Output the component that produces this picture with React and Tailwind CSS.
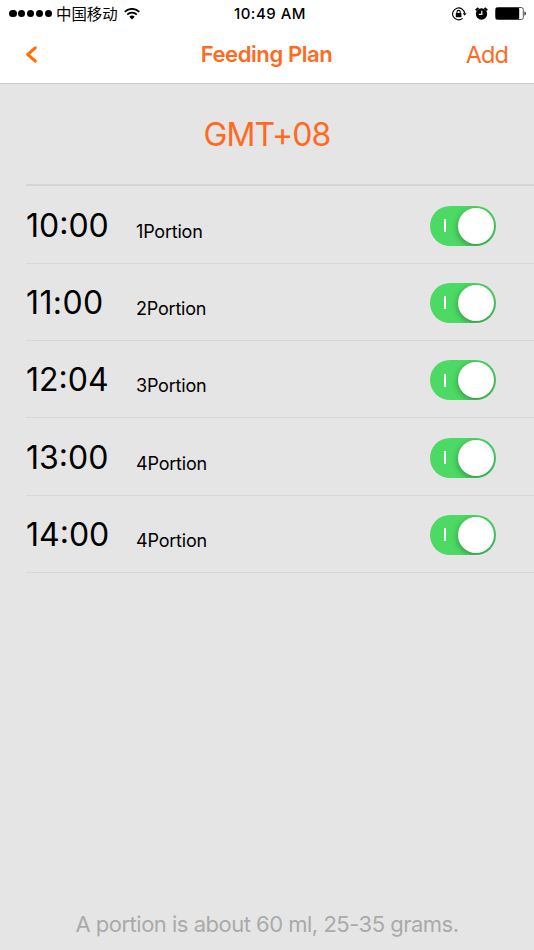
import { useState } from "react";

const PLANS = [
	{ time: "10:00", portion: 1 },
	{ time: "11:00", portion: 2 },
	{ time: "12:04", portion: 3 },
	{ time: "13:00", portion: 4 },
	{ time: "14:00", portion: 4 },
];

const StatusBar = () => (
	<div className="grid h-[27px] grid-cols-3 items-center pl-[9px] pr-[7px] text-black">
		<div className="flex items-center">
			<div className="flex gap-[1.4px]">
				{[0, 1, 2, 3, 4].map((dot) => (
					<span key={dot} className="h-[7.5px] w-[7.5px] rounded-full bg-black" />
				))}
			</div>
			<span className="ml-1 font-['Noto_Sans_CJK_SC',sans-serif] text-[15.4px] leading-none">
				中国移动
			</span>
			<svg className="ml-[6px] h-3 w-4" viewBox="0 0 16 12" fill="none" stroke="#000">
				<path d="M.7 3.8a10.5 10.5 0 0 1 14.6 0" strokeWidth="1.8" />
				<path d="M3.2 6.7a6.7 6.7 0 0 1 9.6 0" strokeWidth="1.7" />
				<path d="M8 11.4 5.3 8.8a3.9 3.9 0 0 1 5.4 0Z" fill="#000" stroke="none" />
			</svg>
		</div>
		<span className="whitespace-nowrap pl-1 text-center text-[15px] font-medium leading-none tracking-[0.5px]">
			10:49 AM
		</span>
		<div className="flex items-center justify-end">
			<svg className="h-[14px] w-[15px]" viewBox="0 0 15 14" fill="none" stroke="#000">
				<path d="M12.6 6.4A6 6 0 1 0 10.6 11.4" strokeWidth="1.1" />
				<path d="M10.7 6.2h3.9l-1.9 2.6Z" fill="#000" stroke="none" />
				<rect x="3.8" y="6" width="5.6" height="4.2" fill="#000" stroke="none" />
				<path d="M5 6.4V5a1.6 1.6 0 0 1 3.2 0v1.4" strokeWidth="1.1" />
			</svg>
			<svg className="ml-2 h-[13px] w-[13px]" viewBox="0 0 13 13" fill="none">
				<circle cx="6.5" cy="7" r="5.7" fill="#000" />
				<path d="M.7 3.2 3.5.9M9.5.9l2.8 2.3" stroke="#000" strokeWidth="1.9" />
				<path d="M6.8 3.8v3.6H3.9" stroke="#fff" strokeWidth="1.2" />
			</svg>
			<svg className="ml-[7px] h-[13px] w-8" viewBox="0 0 32 13" fill="none">
				<rect x=".5" y=".5" width="27.8" height="12" rx="2" stroke="#555" />
				<rect x=".8" y=".8" width="23.4" height="11.4" rx="1.2" fill="#000" />
				<path d="M29.5 4.5c1.7.5 1.7 3.5 0 4Z" fill="#000" />
			</svg>
		</div>
	</div>
);

const Switch = ({ on, onClick }) => (
	<button
		type="button"
		role="switch"
		aria-checked={on}
		onClick={onClick}
		className={`flex h-[40px] w-[66px] items-center overflow-hidden rounded-full p-[2px] ${
			on ? "justify-between bg-[#4cd964]" : "bg-gray-300"
		}`}
	>
		{on && <span className="ml-3 h-[13px] w-[1.5px] bg-white" />}
		<span className="h-9 w-9 rounded-full bg-white shadow-[0_2px_6px_rgba(0,0,0,0.35)]" />
	</button>
);

const App = () => {
	const [enabled, setEnabled] = useState(PLANS.map(() => true));

	const toggle = (index) => {
		setEnabled(enabled.map((on, i) => (i === index ? !on : on)));
	};

	return (
		<div className="flex h-[950px] w-[534px] flex-col overflow-hidden bg-[#e5e5e5] font-['Inter',sans-serif]">
			<header className="h-[84px] border-b border-[#c9c9c9] bg-white">
				<StatusBar />
				<nav className="grid h-[54px] grid-cols-3 items-center pl-[25px] pr-[26px] text-[#ff6a1f]">
					<button type="button" aria-label="Back">
						<svg className="h-[17px] w-[12px]" viewBox="0 0 12 17" fill="none">
							<path
								d="M10.3 1.8 2.7 8.5l7.6 6.7"
								stroke="#ff7200"
								strokeWidth="3"
								strokeLinecap="round"
								strokeLinejoin="round"
							/>
						</svg>
					</button>
					<h1 className="whitespace-nowrap pt-px text-center text-[22px] font-semibold tracking-[-0.4px]">
						Feeding Plan
					</h1>
					<button type="button" className="pt-px text-right text-[23.5px] tracking-[-0.9px]">
						Add
					</button>
				</nav>
			</header>
			<main className="flex flex-1 flex-col">
				<h2 className="flex h-[100px] items-center justify-center pt-[2px] text-[32px] tracking-[-0.9px] text-[#ff6a1f]">
					GMT+08
				</h2>
				<ul className="ml-[26px] border-t-2 border-[#d5d5d5] pt-[0.4px]">
					{PLANS.map((plan, index) => (
						<li
							key={plan.time}
							className="flex h-[77.35px] items-center border-b border-[#d8d8d8] pr-[38px] pt-[2px]"
						>
							<span
								className={`w-[110px] text-[32px] leading-10 text-black ${
									plan.time.startsWith("11") ? "tracking-[0.4px]" : "tracking-normal"
								}`}
							>
								{plan.time}
							</span>
							<span className="mt-3 text-[18px] leading-6 tracking-[-0.2px] text-black">
								{plan.portion}Portion
							</span>
							<div className="ml-auto">
								<Switch on={enabled[index]} onClick={() => toggle(index)} />
							</div>
						</li>
					))}
				</ul>
				<p className="mb-[9px] mt-auto text-center text-[22px] tracking-[-0.5px] text-[#aaa]">
					A portion is about 60 ml, 25-35 grams.
				</p>
			</main>
		</div>
	);
};

export default App;
